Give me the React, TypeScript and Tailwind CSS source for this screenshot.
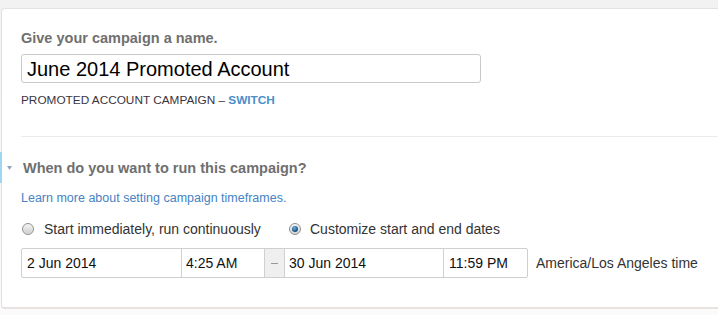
const font = { fontFamily: '"Liberation Sans", Arial, sans-serif' }

function Radio({ checked }: { checked?: boolean }) {
  return (
    <span className="flex h-[12px] w-[12px] shrink-0 items-center justify-center rounded-full border border-[#8f9090] bg-linear-to-b from-[#f4f4f4] to-[#cfcfcf] shadow-[inset_0_0_1px_#fff]">
      {checked && (
        <span className="h-[6px] w-[6px] rounded-full bg-[radial-gradient(circle_at_40%_35%,#6fb1e0,#1b5a8c_60%,#123e63)]" />
      )}
    </span>
  )
}

function Field({ w, text, pl = 'pl-[5px]', border = true }: { w: string; text: string; pl?: string; border?: boolean }) {
  return (
    <div className={`${w} ${pl} flex h-full items-center text-[14px] text-[#111] ${border ? 'border-r border-[#d0d0d0]' : ''}`}>
      {text}
    </div>
  )
}

export default function App() {
  return (
    <div className="flex h-[315px] w-[718px] overflow-hidden bg-linear-to-b from-[#f2f2f2] to-[#fbfbfb] pl-px pt-2" style={font}>
      <div className="flex h-[301px] flex-1 flex-col rounded-tl-[4px] rounded-bl-[4px] border-t border-b-2 border-l border-t-[#e2e2e2] border-b-[#e6e2df] border-l-[#e2e0df] bg-white pl-[19px] pt-[20px]">
        {/* Campaign name */}
        <div className="h-[18px] text-[14.5px] font-bold leading-[18px] text-[#6f6f6f]">Give your campaign a name.</div>
        <div className="mt-[7px] flex h-[29px] w-[460px] items-center rounded-[3px] border border-[#c9c9c9] px-[5px] text-[20px] text-black">
          June 2014 Promoted Account
        </div>
        <div className="mt-[10px] text-[11.8px] leading-[14px] text-[#3a3440]">
          PROMOTED ACCOUNT CAMPAIGN – <span className="font-bold text-[#4a8fc9]">SWITCH</span>
        </div>

        <div className="mt-[29px] h-px bg-[#ebebeb]" />

        {/* Timeframe heading */}
        <div className="-ml-[21px] mt-[15px] flex h-[31px] items-center">
          <div className="h-full w-[2px] bg-[#9fd5f0]" />
          <svg width="5" height="4" viewBox="0 0 5 4" className="ml-[5px]">
            <path d="M0 0H5L2.5 4Z" fill="#8ea6bf" />
          </svg>
          <div className="ml-[11px] text-[14.5px] font-bold leading-[18px] text-[#6f6f6f]">When do you want to run this campaign?</div>
        </div>

        <div className="mt-[8px] text-[12.5px] leading-[15px] text-[#4682c4]">Learn more about setting campaign timeframes.</div>

        {/* Radios */}
        <div className="mt-[15px] flex h-[17px] items-center text-[14px] leading-[17px] text-[#333]">
          <div className="ml-px flex w-[267px] items-center gap-[10px]">
            <span className="mb-[2px]"><Radio /></span>
            <span>Start immediately, run continuously</span>
          </div>
          <div className="flex items-center gap-[9px]">
            <span className="mb-[2px]"><Radio checked /></span>
            <span>Customize start and end dates</span>
          </div>
        </div>

        {/* Date range */}
        <div className="mt-[10px] flex h-[30px] items-center">
          <div className="flex h-full w-[507px] items-stretch rounded-[2px] border border-[#cfcfcf]">
            <Field w="w-[160px]" text="2 Jun 2014" />
            <Field w="w-[83px]" text="4:25 AM" pl="pl-[4px]" />
            <div className="flex w-[20px] items-center justify-center border-r border-[#d0d0d0] bg-[#efefef]">
              <div className="h-px w-[7px] bg-[#9a9a9a]" />
            </div>
            <Field w="w-[159px]" text="30 Jun 2014" pl="pl-[4px]" />
            <Field w="w-[83px]" text="11:59 PM" border={false} />
          </div>
          <div className="ml-[8px] text-[14px] text-[#333]">America/Los Angeles time</div>
        </div>
      </div>
    </div>
  )
}
